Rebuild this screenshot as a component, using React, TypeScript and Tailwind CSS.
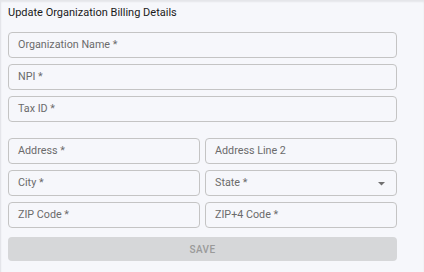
import { ReactNode } from "react";

const font = { fontFamily: "Roboto, 'Noto Sans', Arial, sans-serif" };

function Field({ label, select }: { label: string; select?: boolean }) {
  return (
    <div className="flex h-[26px] items-center justify-between rounded-[4px] border border-[#c4c4c4] bg-[#f6f7fb] pl-[9px] pr-[11px]">
      <span className="text-[10.75px] text-[#6b6b6b]">{label}</span>
      {select ? (
        <svg width="7" height="4" viewBox="0 0 7 4" className="mt-[1px]">
          <path d="M0 0h7L3.5 3.5z" fill="#707070" />
        </svg>
      ) : null}
    </div>
  );
}

function Row({ children }: { children: ReactNode }) {
  return <div className="grid grid-cols-[192px_192px] gap-x-[5px]">{children}</div>;
}

export default function App() {
  return (
    <div
      style={font}
      className="h-[272px] w-full border-l border-[#e4e5ea] bg-[#f6f7fb] pl-[7px] pr-[27px] shadow-[inset_0_2px_2px_rgba(0,0,0,0.07)]"
    >
      <div className="h-6 pt-[1px] text-[11px] leading-6 text-[#1a1a1a]">
        Update Organization Billing Details
      </div>
      <div className="mt-2 flex flex-col gap-[6px]">
        <Field label="Organization Name *" />
        <Field label="NPI *" />
        <Field label="Tax ID *" />
      </div>
      <div className="mt-4 flex flex-col gap-[6px]">
        <Row>
          <Field label="Address *" />
          <Field label="Address Line 2" />
        </Row>
        <Row>
          <Field label="City *" />
          <Field label="State *" select />
        </Row>
        <Row>
          <Field label="ZIP Code *" />
          <Field label="ZIP+4 Code *" />
        </Row>
      </div>
      <button
        type="button"
        disabled
        className="mt-[9px] h-6 w-full rounded-[4px] bg-[#d6d7d9] text-[10px] font-medium tracking-[0.4px] text-[#9a9a9a]"
      >
        SAVE
      </button>
    </div>
  );
}
